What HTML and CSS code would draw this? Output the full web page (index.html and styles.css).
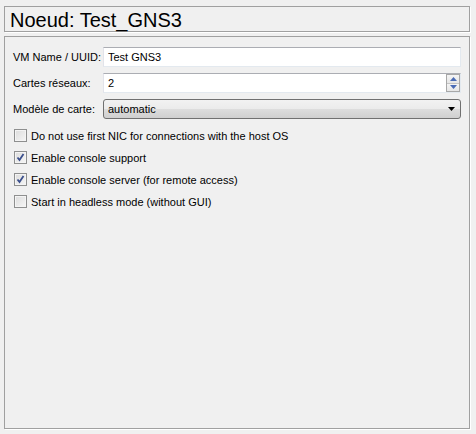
FILE: index.html
```html
<!DOCTYPE html>
<html>
<head>
<meta charset="utf-8">
<link rel="stylesheet" href="styles.css">
</head>
<body>
<div class="page">
  <div class="title-box"><span class="title">Noeud: Test_GNS3</span></div>
  <div class="panel">
    <div class="form">
      <label class="lbl">VM Name / UUID:</label>
      <div class="edit">Test GNS3</div>
      <label class="lbl">Cartes réseaux:</label>
      <div class="edit spin">
        <span class="val">2</span>
        <span class="spin-btns">
          <span class="sb up"><svg width="7" height="4" viewBox="0 0 7 4"><path d="M0 4 L3.5 0 L7 4 Z" fill="#4a6bb5"/></svg></span>
          <span class="sb down"><svg width="7" height="4" viewBox="0 0 7 4"><path d="M0 0 L7 0 L3.5 4 Z" fill="#4a6bb5"/></svg></span>
        </span>
      </div>
      <label class="lbl">Modèle de carte:</label>
      <div class="combo">
        <span>automatic</span>
        <svg class="arrow" width="7" height="4" viewBox="0 0 7 4"><path d="M0 0 L7 0 L3.5 4 Z" fill="#000"/></svg>
      </div>
    </div>
    <div class="checks">
      <div class="chk"><span class="box"></span><span>Do not use first NIC for connections with the host OS</span></div>
      <div class="chk"><span class="box on"><svg width="9" height="9" viewBox="0 0 9 9"><path d="M1.5 4.5 L3.5 7 L7.5 1" fill="none" stroke="#3b4f8c" stroke-width="1.8"/></svg></span><span>Enable console support</span></div>
      <div class="chk"><span class="box on"><svg width="9" height="9" viewBox="0 0 9 9"><path d="M1.5 4.5 L3.5 7 L7.5 1" fill="none" stroke="#3b4f8c" stroke-width="1.8"/></svg></span><span>Enable console server (for remote access)</span></div>
      <div class="chk"><span class="box"></span><span>Start in headless mode (without GUI)</span></div>
    </div>
  </div>
</div>
</body>
</html>
```
FILE: styles.css
```css
* {
  box-sizing: border-box;
}
html, body {
  margin: 0;
  padding: 0;
  background: #f0f0f0;
}
body {
  font-family: "Liberation Sans", Arial, sans-serif;
  font-size: 11px;
  color: #000;
  width: 476px;
  height: 434px;
  overflow: hidden;
}
.page {
  display: flex;
  flex-direction: column;
  padding: 6px 6px 0 4px;
  gap: 4px;
}
.title-box {
  height: 26px;
  border: 1px solid #a0a0a0;
  box-shadow: 1px 1px 0 #fff;
  display: flex;
  align-items: center;
  padding-left: 5px;
}
.title {
  font-size: 20px;
  line-height: 24px;
  margin-top: 1px;
}
.panel {
  height: 393px;
  border: 1px solid #a0a0a0;
  box-shadow: 1px 1px 0 #fff;
  padding: 10px 8px 0 8px;
}
.form {
  display: grid;
  grid-template-columns: 89px 1fr;
  column-gap: 1px;
  row-gap: 6px;
  align-items: center;
}
.lbl {
  white-space: nowrap;
}
.edit {
  height: 20px;
  border: 1px solid #e3e9ef;
  border-top-color: #abadb3;
  border-left-color: #e2e3ea;
  background: #fff;
  display: flex;
  align-items: center;
  padding-left: 4px;
}
.spin {
  justify-content: space-between;
}
.spin-btns {
  display: flex;
  flex-direction: column;
  width: 14px;
  height: 18px;
  border: 1px solid #a8a8a8;
  margin-right: 0;
  background: #fff;
}
.sb {
  flex: 1;
  display: flex;
  align-items: center;
  justify-content: center;
  background: linear-gradient(#f4f4f4, #e6e6e6);
}
.sb.up {
  border-bottom: 1px solid #c4c4c4;
}
.combo {
  height: 20px;
  border: 1px solid #707070;
  border-radius: 3px;
  background: linear-gradient(#f2f2f2 0%, #ebebeb 50%, #dddddd 51%, #cfcfcf 100%);
  display: flex;
  align-items: center;
  justify-content: space-between;
  padding: 0 5px 0 4px;
}
.arrow {
  display: block;
}
.checks {
  display: flex;
  flex-direction: column;
  gap: 9px;
  margin-top: 10px;
  padding-left: 1px;
}
.chk {
  display: flex;
  align-items: center;
  gap: 4px;
  height: 13px;
}
.box {
  width: 13px;
  height: 13px;
  border: 1px solid #8e8f8f;
  background: linear-gradient(135deg, #dcdcdc, #f6f6f6);
  box-shadow: inset 0 0 0 1px #f4f4f4;
  display: flex;
  align-items: center;
  justify-content: center;
  flex: none;
}
.box svg {
  display: block;
}
```
